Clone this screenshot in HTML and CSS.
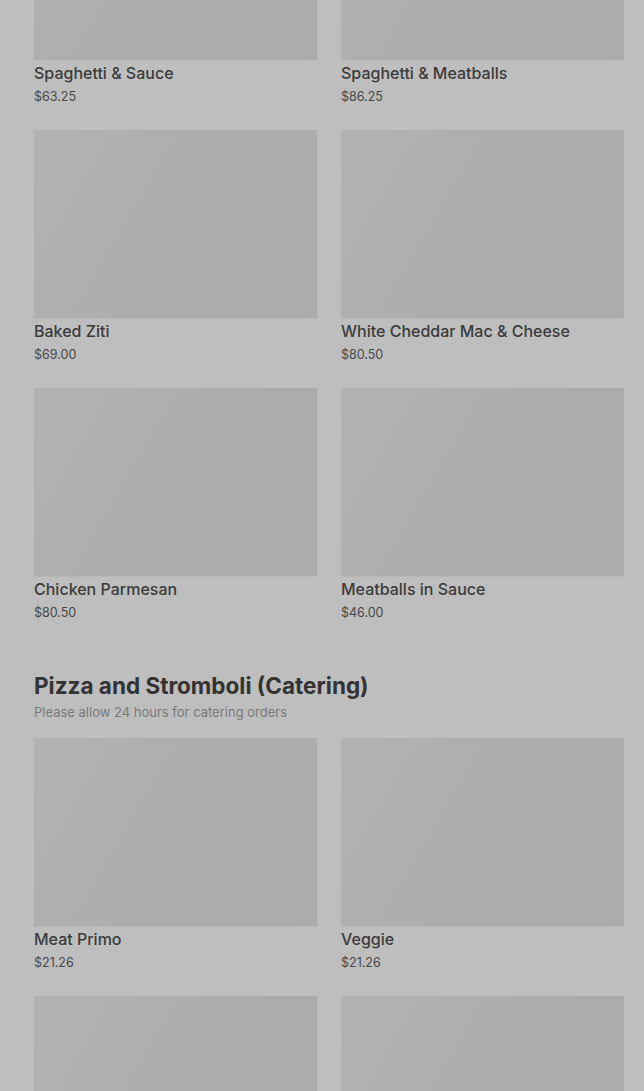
FILE: index.html
```html
<!DOCTYPE html>
<html lang="en">
<head>
    <meta charset="UTF-8">
    <meta name="viewport" content="width=device-width, initial-scale=1.0">
    <title>Catering Menu</title>
    <link rel="stylesheet" href="styles.css">
</head>
<body>
    <main class="menu">
        <section class="section first">
            <div class="grid">
                <div class="item">
                    <div class="photo"></div>
                    <h3>Spaghetti &amp; Sauce</h3>
                    <p class="price">$63.25</p>
                </div>
                <div class="item">
                    <div class="photo"></div>
                    <h3>Spaghetti &amp; Meatballs</h3>
                    <p class="price">$86.25</p>
                </div>
                <div class="item">
                    <div class="photo"></div>
                    <h3>Baked Ziti</h3>
                    <p class="price">$69.00</p>
                </div>
                <div class="item">
                    <div class="photo"></div>
                    <h3>White Cheddar Mac &amp; Cheese</h3>
                    <p class="price">$80.50</p>
                </div>
                <div class="item">
                    <div class="photo"></div>
                    <h3>Chicken Parmesan</h3>
                    <p class="price">$80.50</p>
                </div>
                <div class="item">
                    <div class="photo"></div>
                    <h3>Meatballs in Sauce</h3>
                    <p class="price">$46.00</p>
                </div>
            </div>
        </section>

        <section class="section">
            <h2>Pizza and Stromboli (Catering)</h2>
            <p class="note">Please allow 24 hours for catering orders</p>
            <div class="grid">
                <div class="item">
                    <div class="photo"></div>
                    <h3>Meat Primo</h3>
                    <p class="price">$21.26</p>
                </div>
                <div class="item">
                    <div class="photo"></div>
                    <h3>Veggie</h3>
                    <p class="price">$21.26</p>
                </div>
                <div class="item">
                    <div class="photo"></div>
                    <h3>&nbsp;</h3>
                    <p class="price">&nbsp;</p>
                </div>
                <div class="item">
                    <div class="photo"></div>
                    <h3>&nbsp;</h3>
                    <p class="price">&nbsp;</p>
                </div>
            </div>
        </section>
    </main>
</body>
</html>
```

FILE: styles.css
```css
* {
    margin: 0;
    padding: 0;
    box-sizing: border-box;
}
body {
    background-color: #bebebe;
    font-family: 'Inter', 'Noto Sans', sans-serif;
    color: #3a3a3a;
    overflow: hidden;
}
.menu {
    padding: 0 20px 0 34px;
    margin-top: -128px;
}
.section h2 {
    font-size: 22.5px;
    font-weight: 700;
    color: #333;
    line-height: 28px;
}
.section .note {
    font-size: 13px;
    color: #7a7a7a;
    line-height: 18px;
    margin: 3px 0 17px;
}
.first {
    margin-bottom: 26px;
}
.grid {
    display: grid;
    grid-template-columns: 1fr 1fr;
    column-gap: 24px;
    row-gap: 0;
}
.item {
    height: 258px;
}
.photo {
    height: 188px;
    background: linear-gradient(120deg, #b3b3b3, #adadad 45%, #acacac);
    box-shadow: 0 1px 1px rgba(0, 0, 0, 0.03);
}
.item h3 {
    font-size: 16px;
    font-weight: 500;
    line-height: 22px;
    margin-top: 2px;
    color: #3b3b3b;
}
.price {
    font-size: 12.5px;
    line-height: 18px;
    margin-top: 4px;
    color: #484848;
}
```
